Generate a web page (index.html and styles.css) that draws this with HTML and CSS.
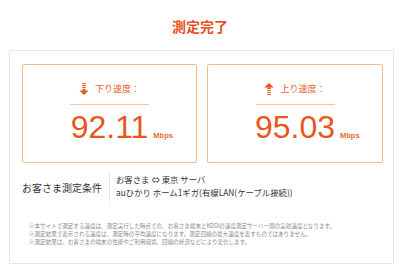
FILE: index.html
```html
<!DOCTYPE html>
<html lang="ja">
<head>
<meta charset="utf-8">
<title>測定完了</title>
<link rel="stylesheet" href="styles.css">
</head>
<body>
<h1 class="title">測定完了</h1>
<section class="result">
  <div class="cards">
    <div class="card">
      <div class="label">
        <svg class="icon" viewBox="0 0 10 12" width="10" height="12" aria-hidden="true">
          <rect x="3.3" y="0" width="3.4" height="1.1"/>
          <rect x="3.3" y="2" width="3.4" height="1.1"/>
          <rect x="3.3" y="4" width="3.4" height="1.1"/>
          <rect x="3.3" y="6" width="3.4" height="1.6"/>
          <polygon points="0.3,7.4 9.7,7.4 5,12"/>
        </svg>
        <span>下り速度：</span>
      </div>
      <div class="value"><span class="num">92.11</span><span class="unit">Mbps</span></div>
    </div>
    <div class="card">
      <div class="label">
        <svg class="icon" viewBox="0 0 10 12" width="10" height="12" aria-hidden="true">
          <polygon points="5,0 9.7,4.6 0.3,4.6"/>
          <rect x="3.3" y="4.4" width="3.4" height="1.6"/>
          <rect x="3.3" y="6.9" width="3.4" height="1.1"/>
          <rect x="3.3" y="8.9" width="3.4" height="1.1"/>
          <rect x="3.3" y="10.9" width="3.4" height="1.1"/>
        </svg>
        <span>上り速度：</span>
      </div>
      <div class="value"><span class="num">95.03</span><span class="unit">Mbps</span></div>
    </div>
  </div>
  <div class="cond">
    <div class="cond-label">お客さま測定条件</div>
    <div class="cond-info">
      <p>お客さま ⇔ 東京 サーバ</p>
      <p>auひかり ホーム1ギガ(有線LAN(ケーブル接続))</p>
    </div>
  </div>
  <ul class="notes">
    <li>※本サイトで測定する速度は、測定実行した時点での、お客さま端末とKDDIの速度測定サーバー間の実効速度となります。</li>
    <li>※測定結果で表示される速度は、測定時の平均速度になります。測定回線の最大速度を表すものではありません。</li>
    <li>※測定結果は、お客さまの端末の性能やご利用環境、回線の状況などにより変化します。</li>
  </ul>
</section>
</body>
</html>
```
FILE: styles.css
```css
* { box-sizing: border-box; }
body {
  margin: 0;
  background: #fff;
  font-family: "Noto Sans CJK JP", sans-serif;
  color: #333;
}
.title {
  margin: 0;
  padding-top: 16px;
  height: 50px;
  font-size: 14px;
  line-height: 20px;
  font-weight: bold;
  text-align: center;
  color: #e4531f;
}
.result {
  margin: 0 6px 0 9px;
  border: 1px solid #e8e8e8;
  padding: 13px 10px 16px 12px;
  height: 214px;
}
.cards {
  display: grid;
  grid-template-columns: 175px 176px;
  column-gap: 10px;
}
.card {
  height: 99px;
  border: 1px solid #f2b995;
  border-radius: 2px;
  padding-top: 16px;
}
.label {
  width: 79px;
  margin: 0 auto;
  padding-bottom: 8px;
  border-bottom: 1px solid #f3c5a6;
  display: flex;
  justify-content: center;
  align-items: center;
  gap: 6px;
  height: 24px;
  font-size: 9px;
  line-height: 14px;
  color: #e8652c;
  white-space: nowrap;
}
.icon { fill: #e8561c; flex: none; }
.value {
  display: grid;
  grid-template-columns: 1fr auto 1fr;
  align-items: baseline;
  margin-top: 6px;
  font-family: "Liberation Sans", Arial, sans-serif;
  color: #e8561c;
}
.num {
  grid-column: 2;
  font-size: 32px;
  line-height: 32px;
}
.unit {
  grid-column: 3;
  font-size: 7.5px;
  font-weight: bold;
  margin-left: 5px;
  color: #ea6a33;
}
.cond {
  display: flex;
  align-items: center;
  margin-top: 10px;
  height: 29px;
}
.cond-label {
  width: 87px;
  font-size: 10px;
  color: #333;
}
.cond-info {
  border-left: 1px solid #e3e3e3;
  padding: 0 0 3px 6px;
  height: 29px;
  font-size: 8.4px;
  line-height: 13px;
  color: #333;
}
.cond-info p { margin: 0; white-space: nowrap; }
.notes {
  list-style: none;
  margin: 20px 0 0;
  padding: 0 0 0 7px;
  font-size: 5.55px;
  line-height: 8px;
  color: #8a8a8a;
}
.notes li { white-space: nowrap; }
```
